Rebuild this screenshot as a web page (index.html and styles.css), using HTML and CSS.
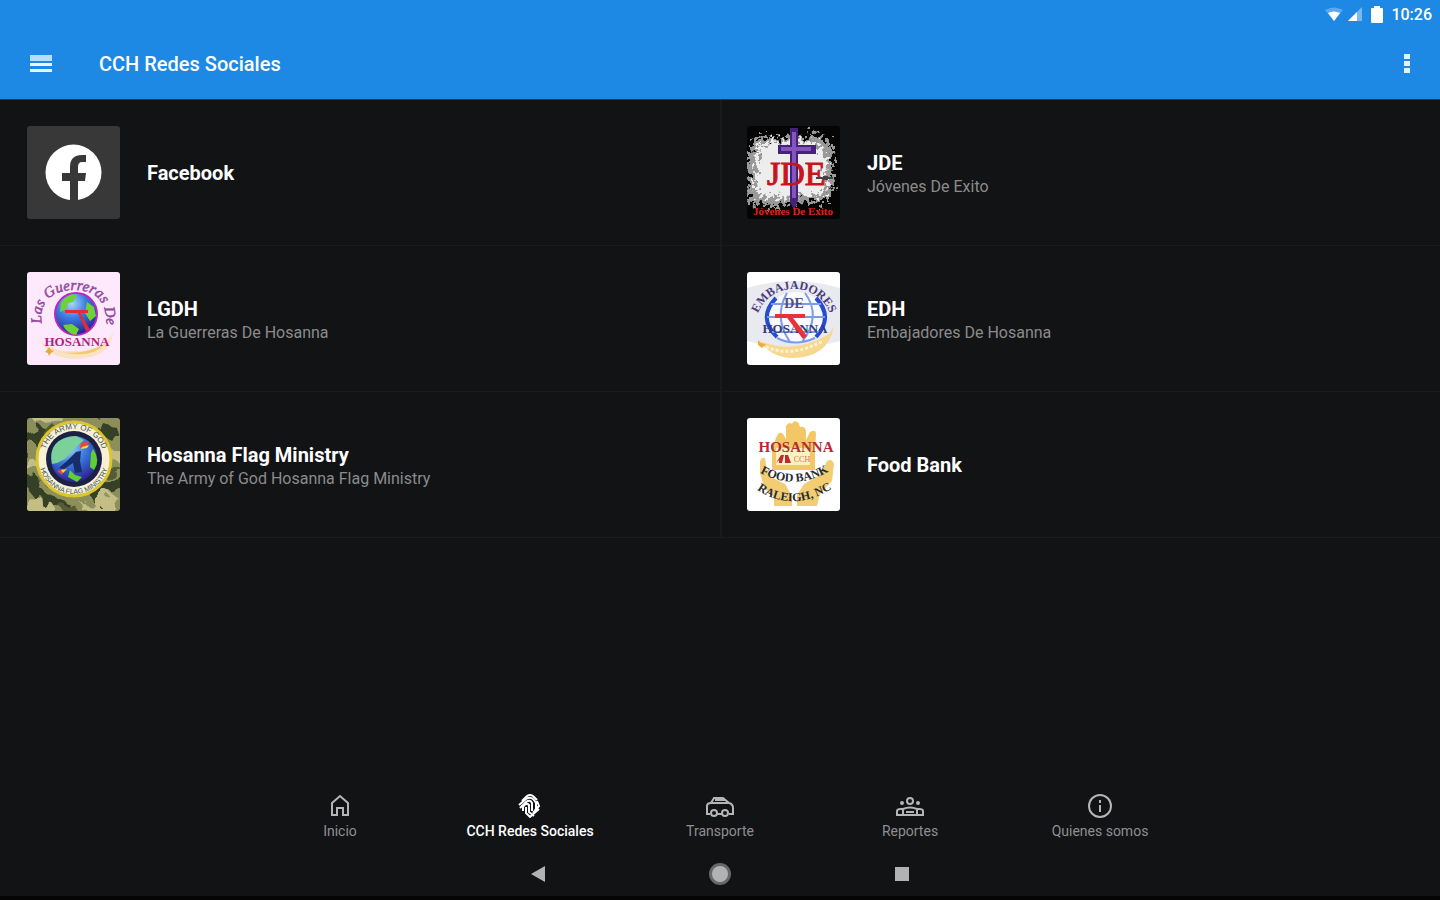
FILE: index.html
```html
<!DOCTYPE html>
<html lang="es">
<head>
    <meta charset="UTF-8">
    <meta name="viewport" content="width=device-width, initial-scale=1.0">
    <title>CCH Redes Sociales</title>
    <link rel="stylesheet" href="styles.css">
</head>
<body>
    <header class="header">
        <div class="status-bar">
            <svg width="18" height="15" viewBox="0 0 18 15"><path d="M0 3Q9-2 18 3L9 14z" fill="#5aa9ee"/><path d="M3 6q6-3 12 0l-6 8z" fill="#fff"/></svg>
            <svg width="16" height="15" viewBox="0 0 16 15"><path d="M15 0v14H1z" fill="#7ab9f0"/><path d="M10 5v9H1z" fill="#fff"/></svg>
            <svg class="battery" width="12" height="17" viewBox="0 0 12 17"><path d="M3 0h6v2h2q1 0 1 1v13q0 1-1 1H1q-1 0-1-1V3q0-1 1-1h2z" fill="#fff"/></svg>
            <span class="clock">10:26</span>
        </div>
        <div class="app-bar">
            <button class="icon-button" aria-label="Menú">
                <svg width="22" height="18" viewBox="0 0 22 18"><path d="M0 0h22v6H0z" fill="#b9dcfa"/><path d="M0 8h22v3H0zM0 14h22v3H0z" fill="#e8f4ff"/></svg>
            </button>
            <h1>CCH Redes Sociales</h1>
            <button class="icon-button more" aria-label="Más opciones">
                <svg width="6" height="20" viewBox="0 0 6 20"><path d="M0 0h6v5H0zM0 7h6v5H0zM0 14h6v5H0z" fill="#e3f1fe"/></svg>
            </button>
        </div>
    </header>

    <main class="list">
        <a class="item" href="#facebook">
            <svg class="thumb" viewBox="0 0 93 93">
                <rect width="93" height="93" fill="#383838"/>
                <circle cx="46.500" cy="46.500" r="28" fill="#fff"/>
                <path d="M43 76V55h-8v-8h8v-6q0-12 12-12h4v7h-4q-4 0-4 5v6h8l-1 8h-7v21z" fill="#383838"/>
            </svg>
            <div class="text"><h2>Facebook</h2></div>
        </a>
        <a class="item" href="#jde">
            <svg class="thumb" viewBox="0 0 93 93">
                <filter id="splatter" x="-10%" y="-10%" width="120%" height="120%">
                    <feTurbulence type="fractalNoise" baseFrequency="0.25" numOctaves="2" seed="4"/>
                    <feDisplacementMap in="SourceGraphic" scale="24" xChannelSelector="R" yChannelSelector="G"/>
                </filter>
                <rect width="93" height="93" fill="#050505"/>
                <path d="M7 12L18 8l8 6 14-4 16 2 12-5 12 8 8 11-3 15 3 15-4 13-9 10-14-5-12 6-10-2-10 4-12-4-12 2-5-14 3-15-5-14z" fill="#999" filter="url(#splatter)"/>
                <path d="M11 19l15-4 16 2 12-2 17 3 9 12-2 18 2 16-12 7-16-3-15 4-12-3-13 2-4-16 2-18z" fill="#ededed" filter="url(#splatter)"/>
                <path d="M43 2h8v17h18v9H51v46l-4 10-4-8V28H31v-9h12z" fill="#44227a"/>
                <path d="M45 6h4v15h15v4H49v47h-4V25H34v-4h11z" fill="#8456bd"/>
                <text class="serif" x="20" y="59" font-size="34" fill="#c9141b" stroke="#c9141b">JDE</text>
                <path d="M69 51h17v2H69zM76 50h5v4h-5z" fill="#444"/>
                <text class="serif bold" x="46" y="89" font-size="11" text-anchor="middle" fill="#e02020">Jóvenes De Exito</text>
            </svg>
            <div class="text two-line">
                <h2>JDE</h2>
                <p>Jóvenes De Exito</p>
            </div>
        </a>
        <a class="item" href="#lgdh">
            <svg class="thumb" viewBox="0 0 93 93">
                <defs>
                    <radialGradient id="earth" cx="40%" cy="25%" r="75%">
                        <stop offset="0" stop-color="#a5d8fa"/>
                        <stop offset="0.450" stop-color="#3a7fe0"/>
                        <stop offset="1" stop-color="#2d2395"/>
                    </radialGradient>
                    <path id="arc-lgdh" d="M16 56C9 35 22 18 47 18S81 33 79 58"/>
                </defs>
                <rect width="93" height="93" fill="#fde9fb"/>
                <path d="M8 60q8 20 39 19 31 0 39-19-2 27-40 27-27-1-38-27z" fill="#fae2c4"/>
                <path d="M17 75q30 13 61-3-17 19-61 3z" fill="#f3ca70"/>
                <circle cx="49" cy="42" r="21" fill="url(#earth)" stroke="#b928c4" stroke-width="2"/>
                <path d="M34 31q8-11 16-8l-4 7-5 1-2 6-6 3zM36 53l9-1 7 5-3 6q-9-1-13-10zM60 30l7 5 2 9-6 5-5-8z" fill="#70d136"/>
                <path d="M38 38h23v3H38zM53 40l10 18-4 1-8-18z" fill="#e52b38"/>
                <text class="script" font-size="15" fill="#94489f" stroke="#94489f" stroke-width="0.500"><textPath href="#arc-lgdh" startOffset="50%" text-anchor="middle">Las Guerreras De</textPath></text>
                <text class="serif bold" x="50" y="74" font-size="13" text-anchor="middle" fill="#b91b80">HOSANNA</text>
                <path d="M20 78l2-3 2 3 3 1-3 2-2 3-1-3-3-1z" fill="#e9a934"/>
            </svg>
            <div class="text two-line">
                <h2>LGDH</h2>
                <p>La Guerreras De Hosanna</p>
            </div>
        </a>
        <a class="item" href="#edh">
            <svg class="thumb" viewBox="0 0 93 93">
                <defs><path id="arc-edh" d="M10 44C22 8 72 8 84 44"/></defs>
                <rect width="93" height="93" fill="#fff"/>
                <path d="M0 16q45-14 93 0v53q-43 12-93 0z" fill="#e9e9f0"/>
                <path d="M12 69q36 14 70-7l5-8q-6 32-42 32-20 0-33-17z" fill="#f6d890"/>
                <path d="M19 75q26 11 57-6" fill="none" stroke="#fff2cc" stroke-width="3" stroke-dasharray="3 2"/>
                <ellipse cx="49" cy="45" rx="29" ry="25" fill="#f8faff"/>
                <path d="M29 26q-19 20 1 39M69 26q18 19 0 39" fill="none" stroke="#244bd0" stroke-width="4"/>
                <path d="M40 21q-14 24 3 49M58 21q17 23-3 49M24 32h50M20 45h58M25 60h47M30 66q18 9 38 0" fill="none" stroke="#7e9cec" stroke-width="2"/>
                <text class="serif bold" font-size="12" fill="#4b3b7e"><textPath href="#arc-edh" startOffset="50%" text-anchor="middle">EMBAJADORES</textPath></text>
                <text class="serif bold" x="47" y="36" font-size="14" text-anchor="middle" fill="#535078">DE</text>
                <text class="serif bold" x="48" y="61" font-size="13" text-anchor="middle" fill="#343c83">HOSANNA</text>
                <path d="M28 42h30v4H28zM43 42l17 22-4 3-18-24z" fill="#eb3036"/>
                <path d="M11 68l3 3 5 1-4 4-4-3z" fill="#ecad45"/>
            </svg>
            <div class="text two-line">
                <h2>EDH</h2>
                <p>Embajadores De Hosanna</p>
            </div>
        </a>
        <a class="item" href="#flag-ministry">
            <svg class="thumb" viewBox="0 0 93 93">
                <defs>
                    <path id="arc-army" d="M17 41A30 30 0 0 1 77 41"/>
                    <path id="arc-flag" d="M12 41A35 35 0 0 0 82 41"/>
                    <filter id="camo"><feTurbulence type="fractalNoise" baseFrequency="0.06" numOctaves="2" seed="7"/><feDisplacementMap in="SourceGraphic" scale="28"/></filter>
                </defs>
                <rect width="93" height="93" fill="#8d8f5a"/>
                <g filter="url(#camo)">
                    <path d="M-4 17l17-9 13 9-7 8-11 1-12 10zM71 0l20 11 9 15-16-4-17-12zM-3 55l17 6 2 13 24 9-3 8-24-5L-1 70zM65 76l16-14 18-1-3 12-15 3-13 13z" fill="#343f27"/>
                    <path d="M8-1h27l-9 7-14 2zM3 41l13 5-2 6L-4 51zM79 30l16 4-4 9-12-5zM2 82l22 2 10 12H1zM53 84l16 1 13-10 9 5-7 11-28 2z" fill="#c3bd86"/>
                    <path d="M18 17l10-9 6 6-11 12zM76 53l17-5v8l-18 6zM35 85l13 2 4 8-20-4z" fill="#555b35"/>
                </g>
                <circle cx="47" cy="41" r="37" fill="#f6f1d6" stroke="#ddc52e" stroke-width="3"/>
                <circle cx="47" cy="41" r="28" fill="#1c2143"/>
                <circle cx="47" cy="41" r="23" fill="url(#earth)"/>
                <path d="M25 46q-5-26 24-28l8 4-9 8-10 11-8 4z" fill="#7cd09a"/>
                <path d="M66 31q8 11 1 21l-4-3 1-14zM43 52l5 5 7 2-5 5-9-5z" fill="#60cf33"/>
                <path d="M49 34l5-1-1 10 2 11-7 1-2-10-9 6-5-1 9-8z" fill="#182d69"/>
                <path d="M54 25l8-2-2 6-7 1zM30 53l7-2-2 6z" fill="#ee4436"/>
                <path d="M55 29l7-2-2 3-6 1zM34 52l6-1-4 4z" fill="#ffd735"/>
                <text class="tiny" font-size="8" fill="#45545a"><textPath href="#arc-army" startOffset="50%" text-anchor="middle">THE ARMY OF GOD</textPath></text>
                <text class="tiny" font-size="7" fill="#45545a"><textPath href="#arc-flag" startOffset="50%" text-anchor="middle">HOSANNA FLAG MINISTRY</textPath></text>
            </svg>
            <div class="text two-line">
                <h2>Hosanna Flag Ministry</h2>
                <p>The Army of God Hosanna Flag Ministry</p>
            </div>
        </a>
        <a class="item" href="#food-bank">
            <svg class="thumb" viewBox="0 0 93 93">
                <defs>
                    <path id="arc-food" d="M12 54Q46 74 83 53"/>
                    <path id="arc-raleigh" d="M9 71Q45 96 86 70"/>
                </defs>
                <rect width="93" height="93" fill="#fff"/>
                <path d="M25 52V30l4-10q3-8 7-4l3 5V8q3-5 6-2l1-2q4-2 6 2l1 3q5-1 6 4v9l4-8q5-3 6 1l-1 17v20z" fill="#f3c766"/>
                <path d="M29 30h34v17H29z" fill="#fff1bd"/>
                <path d="M13 45q0-6 5-5l2 12 6 8 12 6 7 12v10H27V79l-10-9-4-15zM80 43q5-3 7 3l-2 17-12 13-3 12H50V77l7-11 14-8 5-6z" fill="#f3cd74"/>
                <text class="serif bold" x="49" y="34" font-size="15" text-anchor="middle" fill="#b52a39">HOSANNA</text>
                <path d="M29 45l5-8h3l-2 8h-3v-3zM38 45v-8h3l3 8h-3z" fill="#bf2935"/>
                <text class="serif" x="55" y="44" font-size="8" text-anchor="middle" fill="#ca716e">CCH</text>
                <text class="serif bold" font-size="12" fill="#262c30"><textPath href="#arc-food" startOffset="50%" text-anchor="middle">FOOD BANK</textPath></text>
                <text class="serif bold" font-size="12" fill="#262c30"><textPath href="#arc-raleigh" startOffset="50%" text-anchor="middle">RALEIGH, NC</textPath></text>
            </svg>
            <div class="text"><h2>Food Bank</h2></div>
        </a>
    </main>

    <footer class="footer">
        <nav class="tabs">
            <a class="tab" href="#inicio">
                <svg width="28" height="26" viewBox="0 0 28 26"><path d="M6 22V10l8-7 8 7v12h-5v-7h-6v7z"/></svg>
                <span>Inicio</span>
            </a>
            <a class="tab active" href="#redes" aria-current="page">
                <svg width="28" height="26" viewBox="0 0 28 26"><path d="M6 8l5-5q3-2 6 0l4 4M3 12l7-6q5-3 8 1l2 3v6M4 15l6-6q4-3 6 1v8M7 18v-4q3-5 6-2v7l5 4M10 14v6l4 4 9-8M17 20l6-7-2-5M19 17l4-4"/></svg>
                <span>CCH Redes Sociales</span>
            </a>
            <a class="tab" href="#transporte">
                <svg width="28" height="26" viewBox="0 0 28 26"><path d="M4 21H1v-8q0-3 4-3l3-5h9l6 5q4 1 4 5v6h-4M11 21h5M4 10h19M9 7h9"/><circle cx="8" cy="20" r="3"/><circle cx="19" cy="20" r="3"/></svg>
                <span>Transporte</span>
            </a>
            <a class="tab" href="#reportes">
                <svg width="28" height="26" viewBox="0 0 28 26"><circle cx="14" cy="8" r="3"/><circle cx="6" cy="10" r="1"/><circle cx="22" cy="10" r="1"/><path d="M1 22v-4q0-2 4-2h2q7-3 14 0h2q4 0 4 2v4zM7 16v6M21 16v6M10 19h8"/></svg>
                <span>Reportes</span>
            </a>
            <a class="tab" href="#quienes">
                <svg width="28" height="26" viewBox="0 0 28 26"><circle cx="14" cy="13" r="11"/><path d="M14 12v7M14 7v3"/></svg>
                <span>Quienes somos</span>
            </a>
        </nav>
        <div class="system-nav">
            <button aria-label="Atrás"><svg width="24" height="24" viewBox="0 0 24 24"><path d="M5 12l14-8v16z" fill="#b2b2b2"/></svg></button>
            <button aria-label="Pantalla de inicio"><svg width="24" height="24" viewBox="0 0 24 24"><circle cx="12" cy="12" r="11" fill="#686868"/><circle cx="12" cy="12" r="8" fill="#b2b2b2"/></svg></button>
            <button aria-label="Recientes"><svg width="24" height="24" viewBox="0 0 24 24"><path d="M5 5h14v14H5z" fill="#b2b2b2"/></svg></button>
        </div>
    </footer>
</body>
</html>
```

FILE: styles.css
```css
* {
    box-sizing: border-box;
}
body {
    margin: 0;
    min-height: 100vh;
    display: flex;
    flex-direction: column;
    font-family: Roboto, sans-serif;
    background: #121315;
    color: #fff;
}
h1, h2, p {
    margin: 0;
}
a {
    color: inherit;
    text-decoration: none;
}
button {
    display: flex;
    align-items: center;
    justify-content: center;
    padding: 0;
    border: none;
    background: none;
    cursor: pointer;
}

/* header */
.header {
    background: #1e88e5;
    border-bottom: 1px solid #14395a;
}
.status-bar {
    display: flex;
    align-items: center;
    justify-content: flex-end;
    gap: 4px;
    height: 29px;
    padding-right: 8px;
}
.battery {
    margin: 0 4px;
}
.clock {
    font-size: 16px;
    font-weight: 500;
}
.app-bar {
    display: flex;
    align-items: center;
    height: 70px;
    padding: 0 20px;
}
.icon-button {
    width: 42px;
    height: 42px;
}
.app-bar h1 {
    flex: 1;
    margin-left: 37px;
    font-size: 20px;
    font-weight: 500;
}
.icon-button.more {
    width: 26px;
}

/* list */
.list {
    display: grid;
    grid-template-columns: 1fr 1fr;
}
.item {
    display: flex;
    align-items: center;
    gap: 27px;
    height: 146px;
    padding-left: 27px;
    border-bottom: 1px solid #1a1b1d;
}
.item:nth-child(odd) {
    box-shadow: 2px 0 #191a1c;
}
.thumb {
    flex: none;
    width: 93px;
    height: 93px;
    border-radius: 3px;
}
.item h2 {
    font-size: 20px;
    font-weight: 700;
    line-height: 24px;
}
.item p {
    font-size: 16px;
    line-height: 24px;
    color: #8b8b8c;
}
.two-line {
    padding-top: 4px;
}
.serif {
    font-family: "Liberation Serif", serif;
}
.script {
    font-family: "Liberation Serif", serif;
    font-style: italic;
}
.tiny {
    font-family: "Liberation Sans", sans-serif;
}
.bold {
    font-weight: 700;
}

/* bottom bars */
.footer {
    margin-top: auto;
    border-bottom: 4px solid #050506;
}
.tabs {
    display: flex;
    justify-content: center;
}
.tab {
    display: flex;
    flex-direction: column;
    align-items: center;
    width: 190px;
    height: 58px;
    font-size: 14px;
    line-height: 24px;
    color: #8f8f90;
}
.tab svg {
    fill: none;
    stroke: #b5b5b6;
    stroke-width: 2;
}
.tab.active {
    color: #fff;
    font-weight: 500;
}
.tab.active svg {
    stroke: #fff;
}
.system-nav {
    display: flex;
    justify-content: center;
    height: 45px;
}
.system-nav button {
    width: 182px;
}
```
